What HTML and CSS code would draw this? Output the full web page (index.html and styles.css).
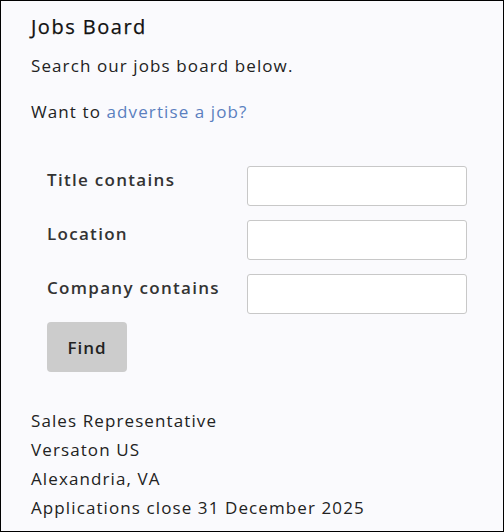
FILE: index.html
```html
<!DOCTYPE html>
<html lang="en">
<head>
<meta charset="utf-8">
<link rel="stylesheet" href="styles.css">
</head>
<body>
<div class="page">
  <h1 class="title">Jobs Board</h1>
  <p class="intro">Search our jobs board below.</p>
  <p class="intro">Want to <a class="link" href="#">advertise a job?</a></p>
  <form class="search">
    <div class="row">
      <label class="label">Title contains</label>
      <input class="field" type="text">
    </div>
    <div class="row">
      <label class="label">Location</label>
      <input class="field" type="text">
    </div>
    <div class="row">
      <label class="label">Company contains</label>
      <input class="field" type="text">
    </div>
    <button class="find" type="button">Find</button>
  </form>
  <div class="job">
    <div class="job-line">Sales Representative</div>
    <div class="job-line">Versaton US</div>
    <div class="job-line">Alexandria, VA</div>
    <div class="job-line">Applications close 31 December 2025</div>
  </div>
</div>
</body>
</html>
```
FILE: styles.css
```css
html, body {
  margin: 0;
  padding: 0;
}
body {
  font-family: "Open Sans", "Liberation Sans", sans-serif;
  color: #222;
}
.page {
  box-sizing: border-box;
  width: 504px;
  height: 532px;
  border: 1px solid #000;
  background: #fafafd;
  padding: 13px 30px 0 30px;
  overflow: hidden;
}
.title {
  margin: 0;
  font-size: 20px;
  font-weight: 500;
  line-height: 26px;
  letter-spacing: 1.5px;
  color: #111;
  -webkit-text-stroke: 0.25px #111;
}
.intro {
  margin: 14px 0 0 0;
  font-size: 17px;
  line-height: 24px;
  letter-spacing: 1.1px;
}
.intro + .intro {
  margin-top: 22px;
}
.link {
  color: #5b7fbf;
  text-decoration: none;
}
.search {
  margin: 42px 0 0 16px;
  display: flex;
  flex-direction: column;
  gap: 14px;
}
.row {
  display: flex;
  align-items: flex-start;
}
.label {
  width: 200px;
  font-size: 17px;
  font-weight: 600;
  line-height: 24px;
  letter-spacing: 1.3px;
  padding-top: 2px;
  color: #333;
}
.field {
  box-sizing: border-box;
  width: 220px;
  height: 40px;
  margin: 0;
  border: 1px solid #c8c8c8;
  border-radius: 3px;
  background: #fff;
}
.find {
  box-sizing: border-box;
  width: 80px;
  height: 50px;
  margin-top: -6px;
  border: none;
  border-radius: 4px;
  background: #cccccc;
  font-family: inherit;
  font-size: 17px;
  font-weight: 600;
  letter-spacing: 1px;
  color: #222;
}
.job {
  margin-top: 34px;
  display: flex;
  flex-direction: column;
}
.job-line {
  font-size: 17px;
  line-height: 29px;
  letter-spacing: 1.1px;
}
```
